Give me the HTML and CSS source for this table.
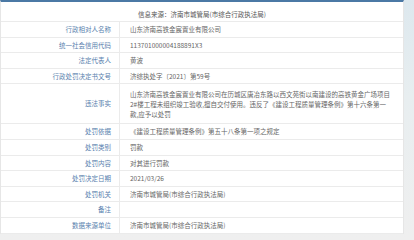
FILE: index.html
```html
<!DOCTYPE html>
<html lang="zh-CN">
<head>
<meta charset="utf-8">
<link rel="stylesheet" href="styles.css">
</head>
<body>
<div class="page">
  <div class="card">
    <div class="title">信息来源：济南市城管局(市综合行政执法局)</div>
    <div class="row"><div class="label">行政相对人名称</div><div class="val">山东济南高铁金宸置业有限公司</div></div>
    <div class="row"><div class="label">统一社会信用代码</div><div class="val">113701000004188891X3</div></div>
    <div class="row"><div class="label">法定代表人</div><div class="val">黄波</div></div>
    <div class="row"><div class="label">行政处罚决定书文号</div><div class="val">济综执处字〔2021〕第59号</div></div>
    <div class="row tall"><div class="label">违法事实</div><div class="val">山东济南高铁金宸置业有限公司在历城区唐冶东路以西文苑街以南建设的高铁黄金广场项目2#楼工程未组织竣工验收,擅自交付使用。违反了《建设工程质量管理条例》第十六条第一款,应予以处罚</div></div>
    <div class="row"><div class="label">处罚依据</div><div class="val">《建设工程质量管理条例》第五十八条第一项之规定</div></div>
    <div class="row"><div class="label">处罚类别</div><div class="val">罚款</div></div>
    <div class="row"><div class="label">处罚内容</div><div class="val">对其进行罚款</div></div>
    <div class="row"><div class="label">处罚决定日期</div><div class="val">2021/03/26</div></div>
    <div class="row"><div class="label">处罚机关</div><div class="val">济南市城管局(市综合行政执法局)</div></div>
    <div class="row"><div class="label">备注</div><div class="val"></div></div>
    <div class="row"><div class="label">数据来源单位</div><div class="val">济南市城管局(市综合行政执法局)</div></div>
  </div>
</div>
</body>
</html>
```

FILE: styles.css
```css
html, body {
  margin: 0;
  padding: 0;
}
body {
  width: 414px;
  height: 240px;
  overflow: hidden;
  background: linear-gradient(to bottom, #dde8ee 0%, #e8eef0 40%, #efefef 100%);
  font-family: "Noto Sans CJK SC", "Noto Sans", sans-serif;
  font-size: 6.5px;
}
.page {
  width: 404px;
}
.card {
  background: #fff;
  border-top: 2px solid #4b79a5;
  border-left: 1px solid #e6e6e6;
  border-right: 1px solid #e6e6e6;
  box-sizing: border-box;
}
.title {
  height: 20px;
  box-sizing: border-box;
  padding-top: 6px;
  line-height: 13px;
  text-align: center;
  color: #555;
  border-bottom: 1px solid #ebebeb;
}
.row {
  display: grid;
  grid-template-columns: 119px 1fr;
  height: 15.6px;
  box-sizing: border-box;
  border-bottom: 1px solid #ebebeb;
  line-height: 14.6px;
}
.row.tall {
  height: 40px;
}
.row.tall .label {
  line-height: 39px;
}
.row.tall .val {
  line-height: 10px;
  padding-top: 5px;
  padding-right: 10px;
  word-break: break-all;
}
.label {
  text-align: right;
  padding-right: 8px;
  color: #5a7fae;
  border-right: 1px solid #ebebeb;
}
.val {
  padding-left: 10px;
  color: #666;
}
```
